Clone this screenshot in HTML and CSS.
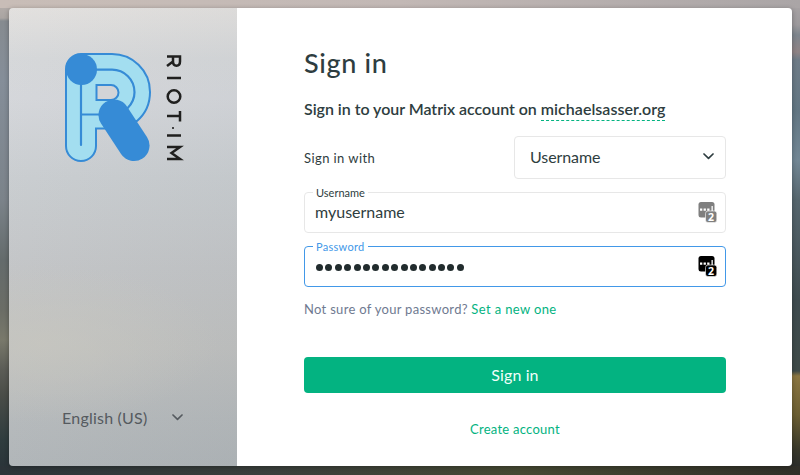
FILE: index.html
```html
<!DOCTYPE html>
<html lang="en">
<head>
<meta charset="utf-8">
<title>Sign in</title>
<link rel="stylesheet" href="styles.css">
</head>
<body>
<main class="modal">
  <aside class="side">
    <svg class="logo" width="120" height="112" viewBox="0 0 120 112" role="img" aria-label="Riot.im">
      <path class="band" d="M1 16a15 15 0 0 1 15-15H47c20 0 38 16 38 38c0 14-6 23-13 29L56 75.500H31v17.500a15 15 0 0 1-30 0z"/>
      <path class="hole" d="M31.500 32h14.500a7.500 7.500 0 0 1 0 15H31.500z"/>
      <path class="line" d="M16 16V92M29 16.700H47a22.500 22.500 0 0 1 22.500 22.500c0 7-3 12-7 16M16 61.500H38"/>
      <circle class="solid" cx="16.500" cy="16.500" r="15.500"/>
      <path class="bar" d="M49 62L69 92.500"/>
      <g class="wordmark">
        <path d="M102 3.500h13v5c0 5.500-7 5.500-7 0v-5M108 8.500l-6 4.500M102 25h14M102 63h13M115 58v10.500M102 82.500h14M102 94h13l-8.500 6l8.500 6h-13"/>
        <circle cx="109" cy="43.500" r="6.300"/>
      </g>
      <circle class="dot" cx="108" cy="75" r="1.100"/>
    </svg>
    <div class="language"><span>English (US)</span><svg width="11" height="7" viewBox="0 0 11 7"><path d="M1 1l4.500 4.300L10 1"/></svg></div>
  </aside>
  <form class="login">
    <h1>Sign in</h1>
    <h2><span class="lead">Sign in to your Matrix account on</span><span class="server">michaelsasser.org</span></h2>
    <div class="method">
      <span class="method-label">Sign in with</span>
      <div class="select"><span>Username</span><svg width="11" height="7" viewBox="0 0 11 7"><path d="M1 1l4.500 4.300L10 1"/></svg></div>
    </div>
    <div class="field">
      <label class="user-label">Username</label>
      <span class="value">myusername</span>
      <svg class="manager" width="19" height="21" viewBox="0 0 19 21"><rect x="0.500" y="0" width="16" height="15.500" rx="2.500"/><path class="marks" d="M2 6.500h2.300v2.300H2zM5.600 6.500h2.300v2.300H5.600zM9.200 6.500h2.300v2.300H9.200zM13.500 4h1.300v5h-1.300z"/><rect class="badge" x="7.500" y="9" width="11.300" height="11.500" rx="2.500"/><text x="13" y="18.600">2</text></svg>
    </div>
    <div class="field focused">
      <label class="pass-label">Password</label>
      <span class="dots"><i></i><i></i><i></i><i></i><i></i><i></i><i></i><i></i><i></i><i></i><i></i><i></i><i></i><i></i><i></i><i></i></span>
      <svg class="manager" width="19" height="21" viewBox="0 0 19 21"><rect x="0.500" y="0" width="16" height="15.500" rx="2.500"/><path class="marks" d="M2 6.500h2.300v2.300H2zM5.600 6.500h2.300v2.300H5.600zM9.200 6.500h2.300v2.300H9.200zM13.500 4h1.300v5h-1.300z"/><rect class="badge" x="7.500" y="9" width="11.300" height="11.500" rx="2.500"/><text x="13" y="18.600">2</text></svg>
    </div>
    <p class="forgot"><span class="hint">Not sure of your password?</span><a>Set a new one</a></p>
    <div class="submit"><span>Sign in</span></div>
    <a class="create">Create account</a>
  </form>
</main>
</body>
</html>
```
FILE: styles.css
```css
* { box-sizing: border-box; }
body {
  margin: 0;
  width: 800px;
  height: 475px;
  padding: 8px 8px 9px 9px;
  overflow: hidden;
  font-family: Lato, sans-serif;
  color: #2e3d40;
  background:
    linear-gradient(90deg, #2c3439, #3a3f3b 35%, #454832 65%, #302f28) 0 466px / 800px 9px no-repeat,
    linear-gradient(90deg, #c8bdb7, #c2b8b5 50%, #aaa5a6) 0 0 / 800px 8px no-repeat,
    linear-gradient(#b7b0ad, #aaa5a2 18px, #868b90 21px, #858e99 80px, #7b838a 200px, #646b6c 260px, #6b6d66 310px, #79796b 340px, #5b5c56 370px, #4a4d48 395px, #2f3c3e 440px, #293238) 0 0 / 400px 475px no-repeat,
    linear-gradient(#aaa5a6, #9c999c 25px, #7d858d 35px, #8f8385 52px, #6e7b87 60px, #627683 110px, #728795 160px, #56666e 200px, #3e4b4f 300px, #3e4a48 371px, #8b7641 376px, #6b5e32 415px, #38382a 450px, #25282a) 400px 0 / 400px 475px no-repeat;
}
.modal {
  display: flex;
  height: 458px;
  border-radius: 4px;
  overflow: hidden;
  box-shadow: 0 1px 5px rgba(0,0,0,.3);
}
.side {
  width: 228px;
  display: flex;
  flex-direction: column;
  justify-content: space-between;
  padding: 45px 0 39px 53px;
  background:
    radial-gradient(ellipse 180px 80px at 30px 335px, rgba(200,199,191,.65), rgba(200,199,191,0)),
    linear-gradient(105deg, rgba(255,255,255,.05), rgba(80,95,105,.05)),
    linear-gradient(#e1dfdd, #d4d6d8 50px, #d3d5d9 90px, #c8cccf 170px, #c2c4c6 260px, #bfc0bf 340px, #b5b9bb 410px, #b0b5b8);
}
.logo { margin-left: 3px; }
.band { fill: #a3def0; stroke: #368bd6; stroke-width: 2; }
.hole { fill: #d2d4d7; stroke: #368bd6; stroke-width: 2; }
.line { fill: none; stroke: #368bd6; stroke-width: 2.200; stroke-linecap: round; }
.solid { fill: #368bd6; }
.bar { stroke: #368bd6; stroke-width: 31; stroke-linecap: round; }
.wordmark { fill: none; stroke: #20201f; stroke-width: 2.500; }
.dot { fill: #20201f; }
.language { display: flex; align-items: center; height: 20px; gap: 25px; font-size: 16px; letter-spacing: .22px; color: #555a5f; }
.language svg path, .select svg path { fill: none; stroke: currentColor; stroke-width: 1.700; stroke-linecap: round; stroke-linejoin: round; }
.login { flex: 1; display: flex; flex-direction: column; padding: 39px 66px 0 67px; background: #fff; }
h1 { margin: 0; height: 32px; font-size: 27px; line-height: 32px; font-weight: 500; letter-spacing: .65px; white-space: nowrap; }
h2 { margin: 20px 0 0; display: flex; gap: 4px; height: 22px; font-size: 16px; line-height: 20px; font-weight: 600; white-space: nowrap; }
.lead { letter-spacing: -.03px; }
.server { letter-spacing: .03px; border-bottom: 1px dashed #03b381; }
.method { display: flex; justify-content: space-between; align-items: center; margin-top: 15px; height: 43px; }
.method-label { font-size: 13px; letter-spacing: .42px; }
.select { width: 212px; height: 43px; display: flex; align-items: center; justify-content: space-between; padding: 0 11px 2px 15px; border: 1px solid #e7e7e7; border-radius: 4px; font-size: 16px; letter-spacing: -.08px; }
.field { position: relative; display: flex; align-items: center; justify-content: space-between; height: 41px; margin-top: 13px; padding: 0 8px 0 10px; border: 1px solid #e7e7e7; border-radius: 4px; font-size: 16px; }
.value { padding-bottom: 2px; }
.field label { position: absolute; left: 8px; top: -7px; padding: 0 3px; background: #fff; font-size: 11px; line-height: 14px; }
.pass-label { letter-spacing: .3px; }
.focused { border-color: #4298e8; }
.focused label { color: #4298e8; }
.dots { display: flex; gap: 2.400px; padding: 1px 0 0 1px; }
.dots i { width: 7px; height: 7px; border-radius: 50%; background: #222c2e; }
.manager { fill: #7f7f7f; }
.focused .manager { fill: #000; }
.manager .marks { fill: #fff; }
.badge { stroke: #fff; stroke-width: .600; }
.manager text { fill: #fff; font: bold 10.500px "Open Sans", sans-serif; text-anchor: middle; }
.forgot { display: flex; gap: 3.500px; margin: 14px 0 0; font-size: 13px; line-height: 17px; color: #6f7a91; white-space: nowrap; }
.hint { letter-spacing: .3px; }
a { color: #03b381; letter-spacing: .37px; }
.submit { height: 36px; margin-top: 39px; padding-bottom: 1px; border-radius: 4px; background: #03b381; color: #f1fffa; font-size: 16px; letter-spacing: .1px; display: flex; justify-content: center; align-items: center; }
.create { align-self: center; margin-top: 28px; font-size: 13px; line-height: 17px; letter-spacing: .25px; }
```
